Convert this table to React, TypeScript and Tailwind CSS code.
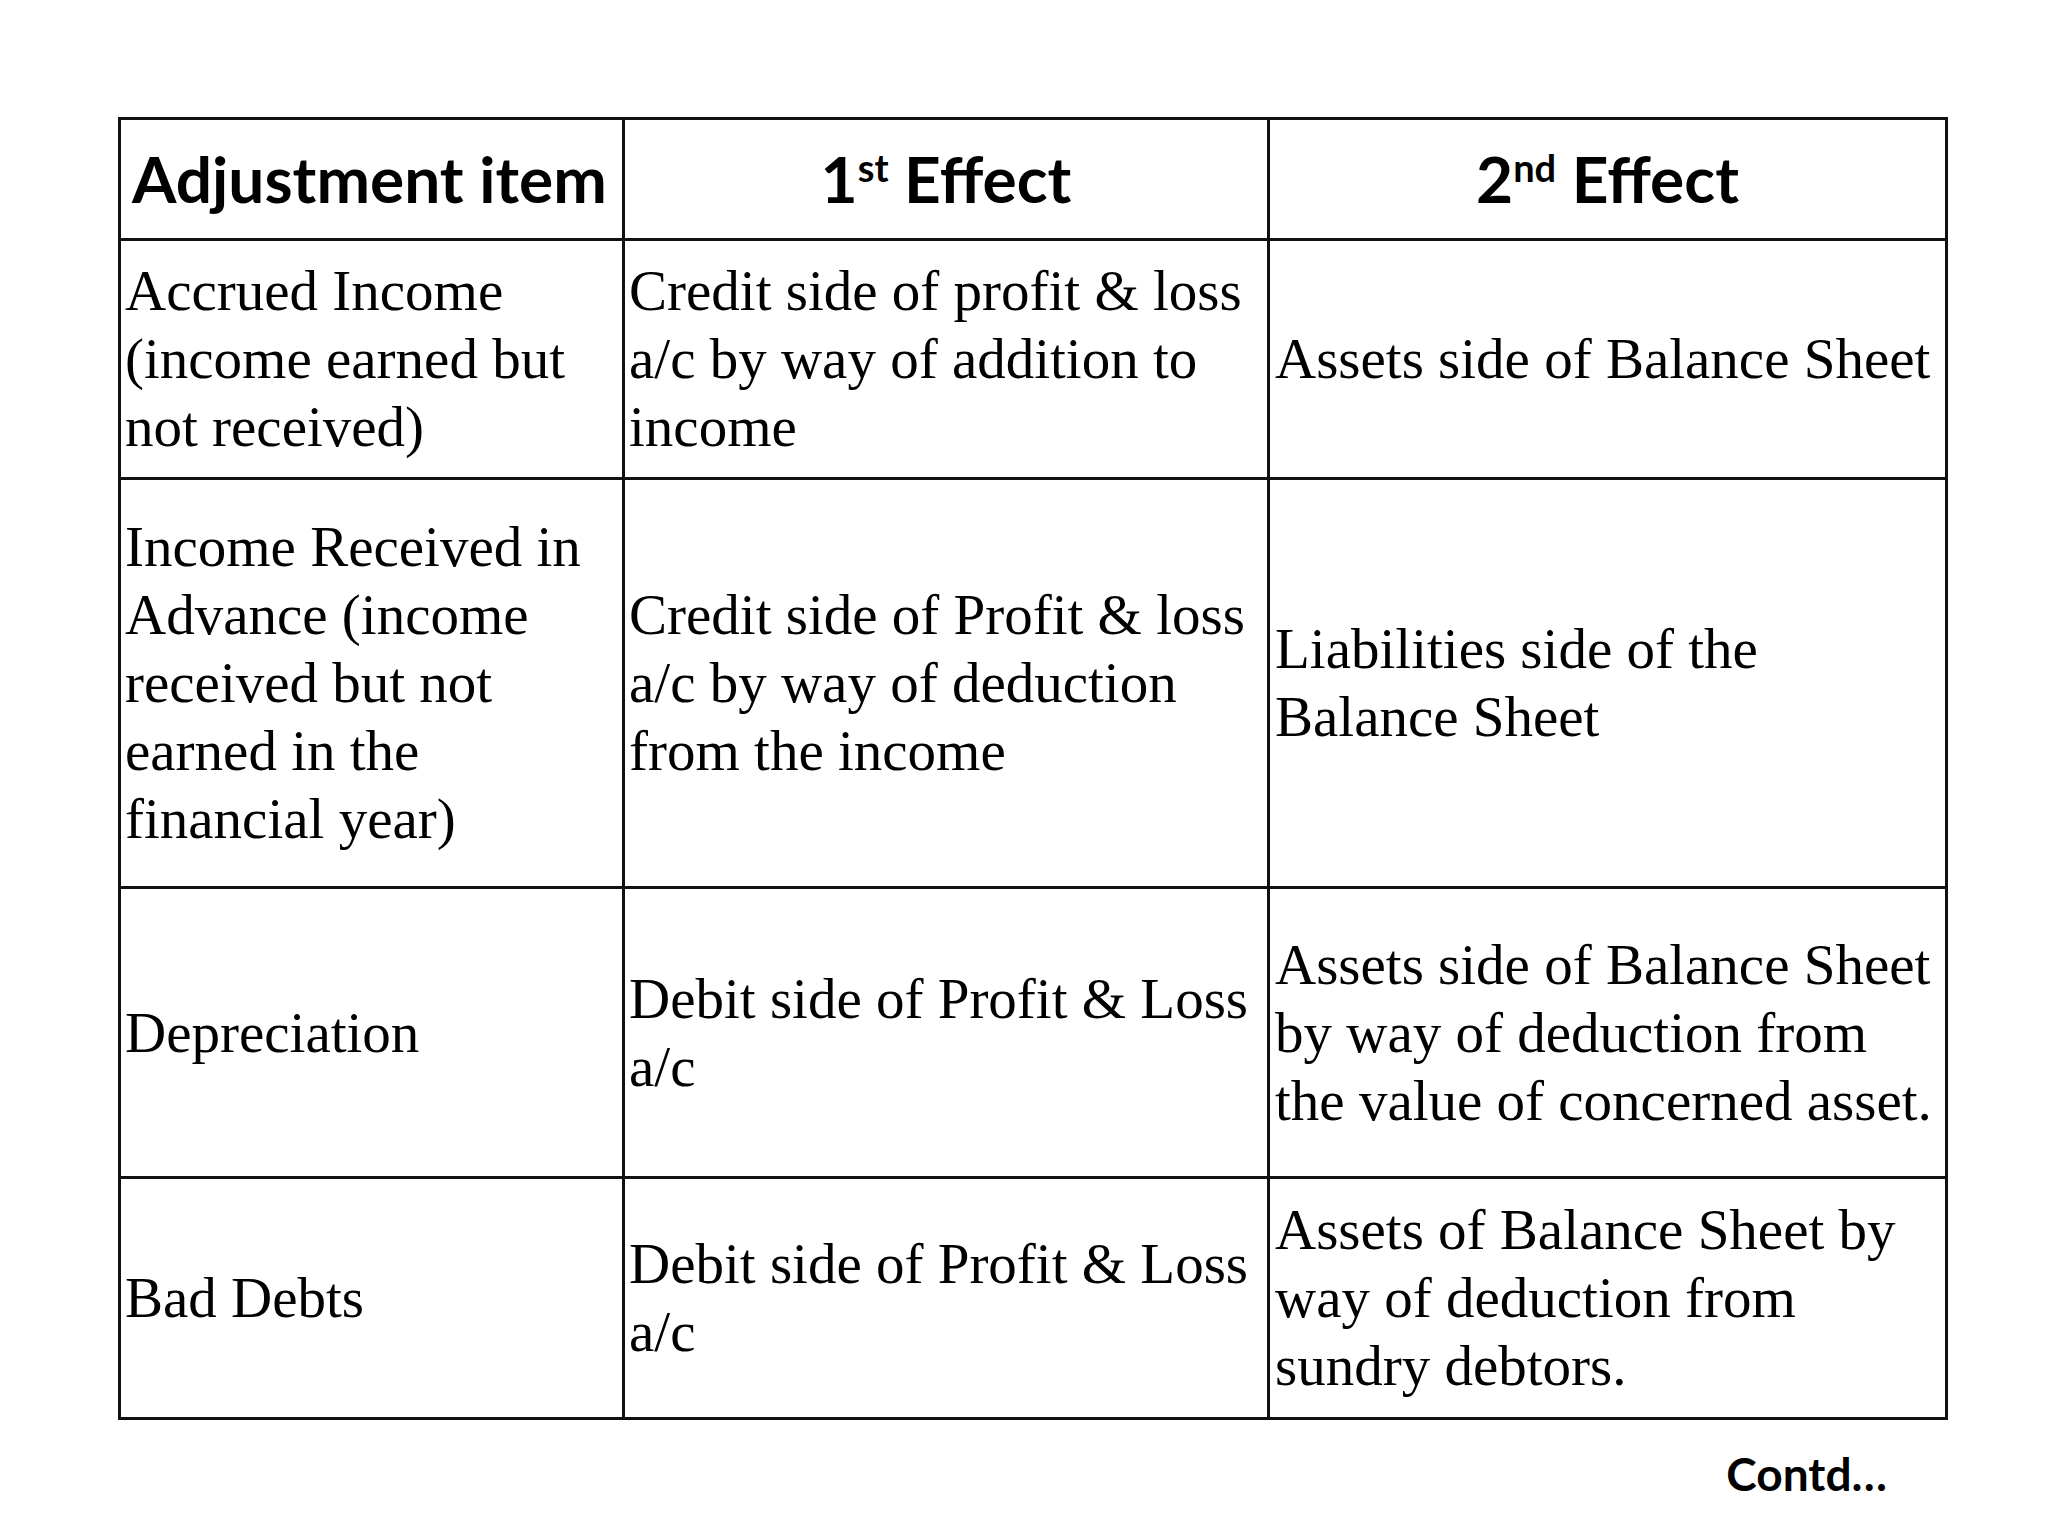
// App.tsx
// Slide: adjustment items and their two effects (final accounts)

const serif = "font-['Liberation_Serif','Times_New_Roman',serif]";
const sans = "font-['Lato','Carlito','Calibri',sans-serif]";

// ─── Data ────────────────────────────────────────────────────────────────────

interface Row {
  h: string;
  item: string[];
  first: string[];
  second: string[];
}

const rows: Row[] = [
  {
    h: "h-[239px]",
    item: ["Accrued Income", "(income earned but", "not received)"],
    first: ["Credit side of profit & loss", "a/c by way of addition to", "income"],
    second: ["Assets side of Balance Sheet"],
  },
  {
    h: "h-[409px]",
    item: ["Income Received in", "Advance (income", "received but not", "earned in the", "financial year)"],
    first: ["Credit side of Profit & loss", "a/c by way of deduction", "from the income"],
    second: ["Liabilities side of the", "Balance Sheet"],
  },
  {
    h: "h-[290px]",
    item: ["Depreciation"],
    first: ["Debit side of Profit & Loss", "a/c"],
    second: ["Assets side of Balance Sheet", "by way of deduction from", "the value of concerned asset."],
  },
  {
    h: "h-[241px]",
    item: ["Bad Debts"],
    first: ["Debit side of Profit & Loss", "a/c"],
    second: ["Assets of Balance Sheet by", "way of deduction from", "sundry debtors."],
  },
];

// ─── Cells ───────────────────────────────────────────────────────────────────

function Lines({ lines }: { lines: string[] }) {
  return (
    <>
      {lines.map((l, i) => (
        <div key={i} className="whitespace-nowrap">
          {l}
        </div>
      ))}
    </>
  );
}

function Cell({ lines, pl }: { lines: string[]; pl: string }) {
  return (
    <td
      className={`border-[3px] border-[#111] align-middle ${pl} pr-1 text-[57px] leading-[68px] text-black ${serif}`}
    >
      <Lines lines={lines} />
    </td>
  );
}

function Ordinal({ n, suffix }: { n: string; suffix: string }) {
  return (
    <>
      {n}
      <span className="align-[21px] text-[38px] leading-none">{suffix}</span> Effect
    </>
  );
}

// ─── Page ────────────────────────────────────────────────────────────────────

export default function App() {
  return (
    <main className="min-h-screen w-full bg-white pl-[118px] pt-[117px]">
      <table className="w-[1827px] table-fixed border-collapse">
        <colgroup>
          <col className="w-[504px]" />
          <col className="w-[645px]" />
          <col className="w-[678px]" />
        </colgroup>
        <thead>
          <tr className="h-[121px]">
            <th
              className={`border-[3px] border-[#111] pl-[11px] text-left align-middle text-[64px] font-bold leading-none text-black ${sans}`}
            >
              Adjustment item
            </th>
            <th
              className={`border-[3px] border-[#111] text-center align-middle text-[64px] font-bold leading-none text-black ${sans}`}
            >
              <Ordinal n="1" suffix="st" />
            </th>
            <th
              className={`border-[3px] border-[#111] text-center align-middle text-[64px] font-bold leading-none text-black ${sans}`}
            >
              <Ordinal n="2" suffix="nd" />
            </th>
          </tr>
        </thead>
        <tbody>
          {rows.map((r) => (
            <tr key={r.item[0]} className={r.h}>
              <Cell lines={r.item} pl="pl-[4px]" />
              <Cell lines={r.first} pl="pl-[4px]" />
              <Cell lines={r.second} pl="pl-[5px]" />
            </tr>
          ))}
        </tbody>
      </table>

      {/* Continuation marker */}
      <div className="flex w-[1827px] justify-end pr-[58px] pt-[31px]">
        <span className={`text-[46px] font-bold leading-none text-black ${sans}`}>Contd…</span>
      </div>
    </main>
  );
}
